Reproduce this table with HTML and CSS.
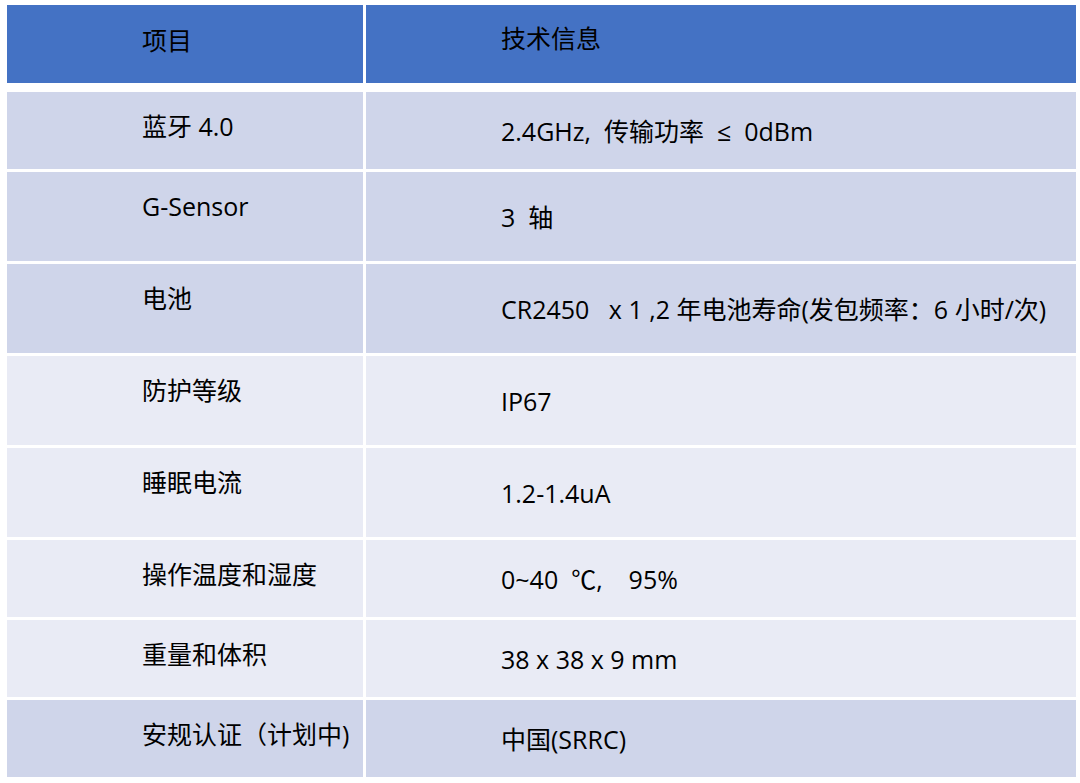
FILE: index.html
```html
<!DOCTYPE html>
<html lang="zh-CN">
<head>
<meta charset="utf-8">
<title>技术信息</title>
<link rel="stylesheet" href="styles.css">
</head>
<body>
<div class="spec-table">
  <div class="row head">
    <div class="cell key">项目</div>
    <div class="cell val">技术信息</div>
  </div>
  <div class="row dark short">
    <div class="cell key">蓝牙 4.0</div>
    <div class="cell val">2.4GHz,&nbsp;&nbsp;传输功率 &nbsp;≤ &nbsp;0dBm</div>
  </div>
  <div class="row dark tall">
    <div class="cell key">G-Sensor</div>
    <div class="cell val">3&nbsp; 轴</div>
  </div>
  <div class="row dark tall">
    <div class="cell key">电池</div>
    <div class="cell val">CR2450 &nbsp;&nbsp;x 1 ,2 年电池寿命(发包频率：6 小时/次)</div>
  </div>
  <div class="row light tall">
    <div class="cell key">防护等级</div>
    <div class="cell val">IP67</div>
  </div>
  <div class="row light tall">
    <div class="cell key">睡眠电流</div>
    <div class="cell val">1.2-1.4uA</div>
  </div>
  <div class="row light short">
    <div class="cell key">操作温度和湿度</div>
    <div class="cell val">0~40 &nbsp;℃, &nbsp;&nbsp;&nbsp;95%</div>
  </div>
  <div class="row light short">
    <div class="cell key">重量和体积</div>
    <div class="cell val">38 x 38 x 9 mm</div>
  </div>
  <div class="row dark short">
    <div class="cell key">安规认证（计划中)</div>
    <div class="cell val">中国(SRRC)</div>
  </div>
</div>
</body>
</html>
```

FILE: styles.css
```css
html, body {
  margin: 0;
  padding: 0;
  background: #ffffff;
}

body {
  font-family: "Open Sans", "Noto Sans CJK SC", sans-serif;
  font-size: 25px;
  font-weight: 400;
  color: #000000;
}

.spec-table {
  width: 1069px;
  margin: 5px 0 0 7px;
  display: flex;
  flex-direction: column;
  gap: 3px;
}

.row {
  display: grid;
  grid-template-columns: 356px 710px;
  column-gap: 3px;
  height: 77px;
}

.row.head {
  height: 78px;
  margin-bottom: 6px;
}

.row.tall {
  height: 89px;
}

.cell {
  line-height: 30px;
  white-space: nowrap;
}

.key {
  padding: 19px 0 0 135px;
}

.val {
  padding-left: 135px;
  display: flex;
  align-items: center;
}

.head .cell {
  background: #4472c4;
  padding-top: 20px;
  align-items: flex-start;
}

.head .val {
  padding-top: 18px;
}

.dark .cell {
  background: #cfd5ea;
}

.light .cell {
  background: #e9ebf5;
}
```
